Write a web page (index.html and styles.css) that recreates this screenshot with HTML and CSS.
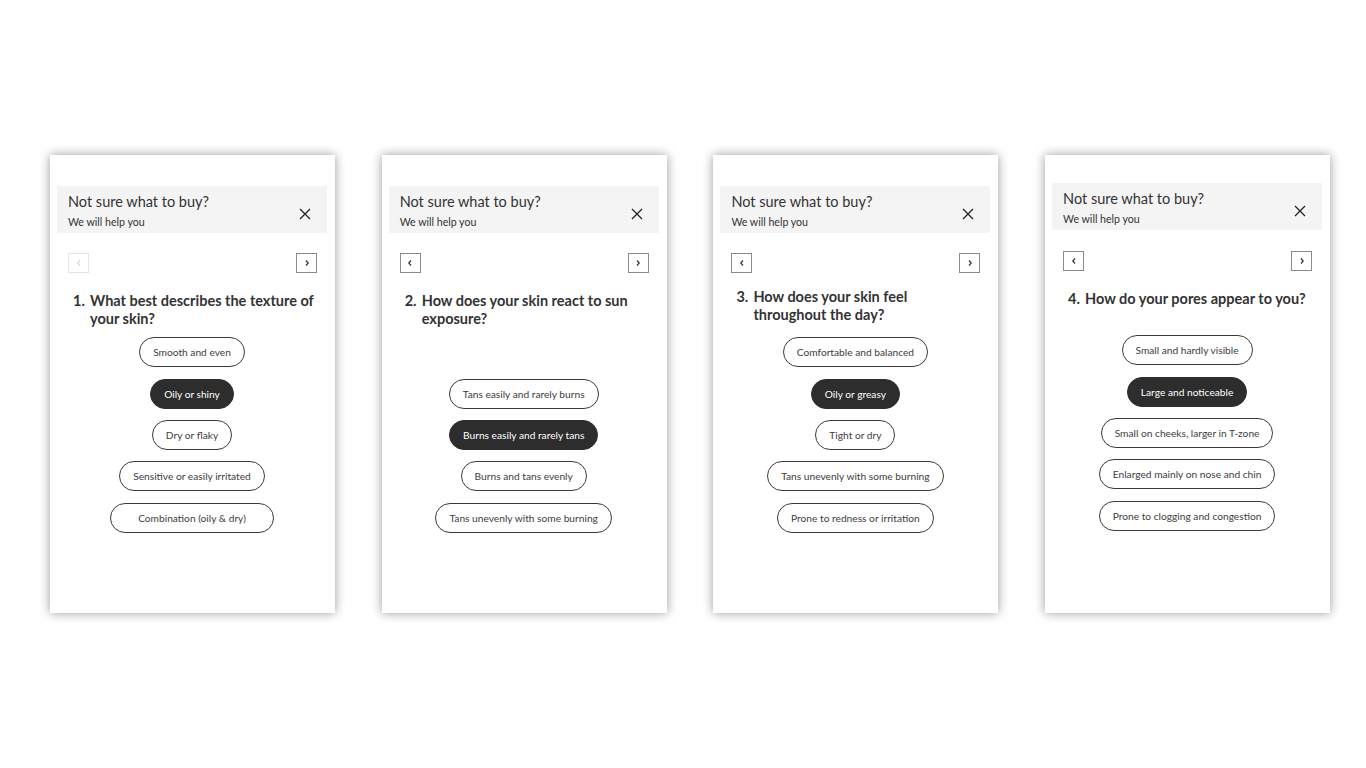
FILE: index.html
```html
<!DOCTYPE html>
<html>
<head>
    <title>Skin Quiz</title>
    <link rel="stylesheet" href="styles.css">
</head>
<body>
    <div class="board">

        <div class="quiz-card">
            <div class="quiz-header">
                <div>
                    <div class="quiz-title">Not sure what to buy?</div>
                    <div class="quiz-subtitle">We will help you</div>
                </div>
                <button class="close-button"><svg width="12" height="12" viewBox="0 0 12 12"><path d="M1 1L11 11M11 1L1 11" stroke="#222" stroke-width="1.3"/></svg></button>
            </div>
            <div class="quiz-nav">
                <button class="nav-button disabled"><svg width="6" height="8" viewBox="0 0 6 8"><path d="M4 1.5L1.8 4L4 6.5" fill="none" stroke="currentColor" stroke-width="1.2"/></svg></button>
                <button class="nav-button"><svg width="6" height="8" viewBox="0 0 6 8"><path d="M2 1.5L4.2 4L2 6.5" fill="none" stroke="currentColor" stroke-width="1.2"/></svg></button>
            </div>
            <div class="question"><span class="question-num">1.</span><span>What best describes the texture of your skin?</span></div>
            <div class="options">
                <button class="option">Smooth and even</button>
                <button class="option selected">Oily or shiny</button>
                <button class="option">Dry or flaky</button>
                <button class="option">Sensitive or easily irritated</button>
                <button class="option wide">Combination (oily &amp; dry)</button>
            </div>
        </div>

        <div class="quiz-card">
            <div class="quiz-header">
                <div>
                    <div class="quiz-title">Not sure what to buy?</div>
                    <div class="quiz-subtitle">We will help you</div>
                </div>
                <button class="close-button"><svg width="12" height="12" viewBox="0 0 12 12"><path d="M1 1L11 11M11 1L1 11" stroke="#222" stroke-width="1.3"/></svg></button>
            </div>
            <div class="quiz-nav">
                <button class="nav-button"><svg width="6" height="8" viewBox="0 0 6 8"><path d="M4 1.5L1.8 4L4 6.5" fill="none" stroke="currentColor" stroke-width="1.2"/></svg></button>
                <button class="nav-button"><svg width="6" height="8" viewBox="0 0 6 8"><path d="M2 1.5L4.2 4L2 6.5" fill="none" stroke="currentColor" stroke-width="1.2"/></svg></button>
            </div>
            <div class="question"><span class="question-num">2.</span><span>How does your skin react to sun exposure?</span></div>
            <div class="options">
                <button class="option">Tans easily and rarely burns</button>
                <button class="option selected">Burns easily and rarely tans</button>
                <button class="option">Burns and tans evenly</button>
                <button class="option">Tans unevenly with some burning</button>
            </div>
        </div>

        <div class="quiz-card">
            <div class="quiz-header">
                <div>
                    <div class="quiz-title">Not sure what to buy?</div>
                    <div class="quiz-subtitle">We will help you</div>
                </div>
                <button class="close-button"><svg width="12" height="12" viewBox="0 0 12 12"><path d="M1 1L11 11M11 1L1 11" stroke="#222" stroke-width="1.3"/></svg></button>
            </div>
            <div class="quiz-nav">
                <button class="nav-button"><svg width="6" height="8" viewBox="0 0 6 8"><path d="M4 1.5L1.8 4L4 6.5" fill="none" stroke="currentColor" stroke-width="1.2"/></svg></button>
                <button class="nav-button"><svg width="6" height="8" viewBox="0 0 6 8"><path d="M2 1.5L4.2 4L2 6.5" fill="none" stroke="currentColor" stroke-width="1.2"/></svg></button>
            </div>
            <div class="question raised"><span class="question-num">3.</span><span>How does your skin feel throughout the day?</span></div>
            <div class="options">
                <button class="option">Comfortable and balanced</button>
                <button class="option selected">Oily or greasy</button>
                <button class="option">Tight or dry</button>
                <button class="option">Tans unevenly with some burning</button>
                <button class="option">Prone to redness or irritation</button>
            </div>
        </div>

        <div class="quiz-card shifted">
            <div class="quiz-header">
                <div>
                    <div class="quiz-title">Not sure what to buy?</div>
                    <div class="quiz-subtitle">We will help you</div>
                </div>
                <button class="close-button"><svg width="12" height="12" viewBox="0 0 12 12"><path d="M1 1L11 11M11 1L1 11" stroke="#222" stroke-width="1.3"/></svg></button>
            </div>
            <div class="quiz-nav">
                <button class="nav-button"><svg width="6" height="8" viewBox="0 0 6 8"><path d="M4 1.5L1.8 4L4 6.5" fill="none" stroke="currentColor" stroke-width="1.2"/></svg></button>
                <button class="nav-button"><svg width="6" height="8" viewBox="0 0 6 8"><path d="M2 1.5L4.2 4L2 6.5" fill="none" stroke="currentColor" stroke-width="1.2"/></svg></button>
            </div>
            <div class="question"><span class="question-num">4.</span><span>How do your pores appear to you?</span></div>
            <div class="options">
                <button class="option">Small and hardly visible</button>
                <button class="option selected">Large and noticeable</button>
                <button class="option">Small on cheeks, larger in T-zone</button>
                <button class="option">Enlarged mainly on nose and chin</button>
                <button class="option">Prone to clogging and congestion</button>
            </div>
        </div>

    </div>
</body>
</html>
```

FILE: styles.css
```css
/* quiz popup mockups, four steps side by side */
body {
    margin: 0;
    background-color: #ffffff;
    font-family: Lato, "Open Sans", sans-serif;
    color: #333333;
}

.board {
    display: flex;
    gap: 46.7px;
    padding: 155px 0 155px 50px;
    min-height: 768px;
    box-sizing: border-box;
}

.quiz-card {
    width: 285px;
    height: 458px;
    flex-shrink: 0;
    background-color: #ffffff;
    box-shadow: 0 0 10px rgba(0, 0, 0, 0.4);
    box-sizing: border-box;
    padding: 31px 8px 0 7px;
}

.quiz-card.shifted {
    padding-top: 28px;
}

.quiz-header {
    display: flex;
    justify-content: space-between;
    align-items: center;
    background-color: #f4f4f4;
    height: 47px;
    box-sizing: border-box;
    padding: 7px 16px 4px 11px;
}

.quiz-title {
    font-size: 14.5px;
    line-height: 18px;
    color: #333333;
}

.quiz-subtitle {
    font-size: 10.6px;
    line-height: 14px;
    margin-top: 4px;
    color: #333333;
}

.close-button {
    border: none;
    background: none;
    padding: 0;
    margin-top: 6px;
    width: 12px;
    height: 12px;
    display: flex;
}

.quiz-nav {
    display: flex;
    justify-content: space-between;
    margin: 20px 10px 0 11px;
}

.shifted .quiz-nav {
    margin-top: 21px;
}

.nav-button {
    width: 21px;
    height: 20px;
    padding: 0;
    border: 1px solid #8a8a8a;
    background-color: #ffffff;
    color: #333333;
    display: flex;
    align-items: center;
    justify-content: center;
}

.nav-button.disabled {
    border-color: #e4e4e4;
    color: #d6d6d6;
}

.question {
    display: flex;
    font-size: 14.5px;
    font-weight: 700;
    line-height: 18px;
    height: 36px;
    margin: 19px 8px 0 16px;
    color: #333333;
}

.question.raised {
    margin-top: 15px;
    height: 40px;
}

.question-num {
    flex: 0 0 17px;
}

.options {
    display: flex;
    flex-direction: column;
    justify-content: flex-end;
    align-items: center;
    gap: 11.3px;
    height: 195px;
    margin-top: 9.5px;
}

.option {
    font-family: Lato, "Open Sans", sans-serif;
    font-size: 10.2px;
    height: 30px;
    padding: 0 13px;
    border: 1px solid #3a3a3a;
    border-radius: 15px;
    background-color: #ffffff;
    color: #3d3d3d;
}

.option.wide {
    padding: 0 27px;
}

.option.selected {
    background-color: #2d2d2d;
    border-color: #2d2d2d;
    color: #ffffff;
}
```
